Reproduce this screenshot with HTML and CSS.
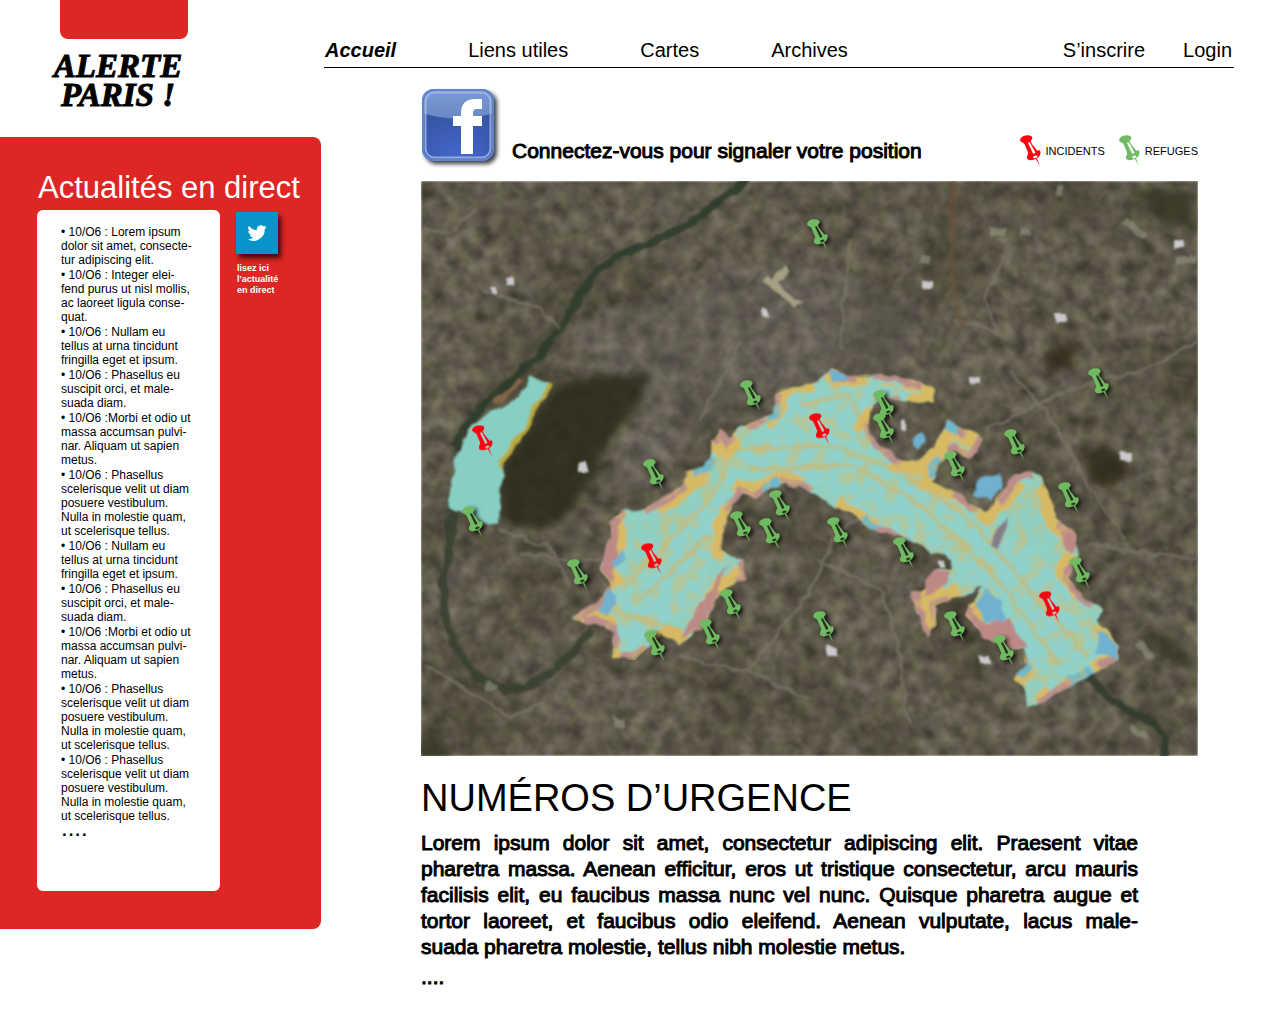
FILE: index.html
```html
<!DOCTYPE html>
<html lang="fr">
<head>
<meta charset="utf-8">
<meta name="viewport" content="width=device-width, initial-scale=1">
<title>Alerte Paris !</title>
<link rel="stylesheet" href="styles.css">
</head>
<body>
<svg class="defs" aria-hidden="true">
  <symbol id="pin" viewBox="0 0 64 94">
    <ellipse cx="19" cy="12" rx="19" ry="11" transform="rotate(-14 19 12)"/>
    <path d="M8 20 32 17 37 28 53 48C60 43 64 49 62 57 61 65 54 72 41 75 31 78 21 76 21 69 21 63 25 60 25 54L15 30Z"/>
    <path class="pin-gap" d="M24 23 30 22 47 53 43 57 40 57Z"/>
    <path class="pin-gap" d="M40 66 47 62 54 64 50 69 42 71Z"/>
    <path d="M48 72 52 71 61 94Z"/>
  </symbol>
</svg>
<div class="page">
  <aside class="side">
    <div class="tab"></div>
    <a class="logo" href="#">ALERTE<br>PARIS !</a>
    <section class="news">
      <h2>Actualités en direct</h2>
      <div class="news-body">
        <ul class="feed">
          <li>• 10/O6 : Lorem ipsum<br>dolor sit amet, consecte-<br>tur adipiscing elit.</li>
          <li>• 10/O6 : Integer elei-<br>fend purus ut nisl mollis,<br>ac laoreet ligula conse-<br>quat.</li>
          <li>• 10/O6 : Nullam eu<br>tellus at urna tincidunt<br>fringilla eget et ipsum.</li>
          <li>• 10/O6 : Phasellus eu<br>suscipit orci, et male-<br>suada diam.</li>
          <li>• 10/O6 :Morbi et odio ut<br>massa accumsan pulvi-<br>nar. Aliquam ut sapien<br>metus.</li>
          <li>• 10/O6 : Phasellus<br>scelerisque velit ut diam<br>posuere vestibulum.<br>Nulla in molestie quam,<br>ut scelerisque tellus.</li>
          <li>• 10/O6 : Nullam eu<br>tellus at urna tincidunt<br>fringilla eget et ipsum.</li>
          <li>• 10/O6 : Phasellus eu<br>suscipit orci, et male-<br>suada diam.</li>
          <li>• 10/O6 :Morbi et odio ut<br>massa accumsan pulvi-<br>nar. Aliquam ut sapien<br>metus.</li>
          <li>• 10/O6 : Phasellus<br>scelerisque velit ut diam<br>posuere vestibulum.<br>Nulla in molestie quam,<br>ut scelerisque tellus.</li>
          <li>• 10/O6 : Phasellus<br>scelerisque velit ut diam<br>posuere vestibulum.<br>Nulla in molestie quam,<br>ut scelerisque tellus.</li>
          <li class="more">....</li>
        </ul>
        <a class="twitter" href="#">
          <svg class="bird" viewBox="0 0 42 42" aria-hidden="true"><g transform="translate(11.500 11.500) scale(.8)"><path fill="#fff" d="M24 4.600a10 10 0 0 1-2.800.8 5 5 0 0 0 2.200-2.700 10 10 0 0 1-3.100 1.200 4.900 4.900 0 0 0-8.400 4.500A14 14 0 0 1 1.700 3.200a4.900 4.900 0 0 0 1.500 6.600 5 5 0 0 1-2.200-.6 4.900 4.900 0 0 0 3.900 4.900 5 5 0 0 1-2.200.1 4.900 4.900 0 0 0 4.600 3.400A10 10 0 0 1 0 19.500a14 14 0 0 0 21.500-12.400A10 10 0 0 0 24 4.600z"/></g></svg>
          <span>lisez ici<br>l'actualité<br>en direct</span>
        </a>
      </div>
    </section>
  </aside>
  <main class="main">
    <nav class="nav">
      <div class="links">
        <a class="current" href="#">Accueil</a>
        <a href="#">Liens utiles</a>
        <a href="#">Cartes</a>
        <a href="#">Archives</a>
      </div>
      <div class="account">
        <a href="#">S’inscrire</a>
        <a href="#">Login</a>
      </div>
    </nav>
    <div class="content">
      <div class="connect">
        <a class="signal" href="#">
          <svg class="facebook" viewBox="0 0 74 74" aria-hidden="true">
            <defs>
              <radialGradient id="fb" cx=".5" cy="1" r=".8"><stop offset="0" stop-color="#4469cf"/><stop offset="1" stop-color="#3553a0"/></radialGradient>
              <linearGradient id="gloss" x1="0" y1="0" x2="0" y2="1"><stop offset="0" stop-color="#7b9bd6"/><stop offset="1" stop-color="#6a88c4"/></linearGradient>
              <clipPath id="fbclip"><rect width="72" height="72" rx="12"/></clipPath>
            </defs>
            <g clip-path="url(#fbclip)">
              <rect width="72" height="72" fill="url(#fb)"/>
              <path d="M0 0H72V24Q36 35 0 24Z" fill="url(#gloss)"/>
            </g>
            <rect x="1" y="1" width="70" height="70" rx="11" fill="none" stroke="#5f84cf" stroke-width="2"/>
            <rect x="3.500" y="3.500" width="65" height="65" rx="9" fill="none" stroke="#a9bce6" stroke-opacity=".8" stroke-width="2"/>
            <path fill="#fff" d="M39 65V37H31V27H39V24C39 14 45 10 53 10H60V20H56C52 20 51 21 51 25V27H60V37H51V65Z"/>
          </svg>
          <span>Connectez-vous pour signaler votre position</span>
        </a>
        <ul class="legend">
          <li class="incident"><svg class="pin" aria-hidden="true"><use href="#pin"/></svg>INCIDENTS</li>
          <li class="refuge"><svg class="pin" aria-hidden="true"><use href="#pin"/></svg>REFUGES</li>
        </ul>
      </div>
      <svg class="map" viewBox="421 181 777 575" role="img" aria-label="Carte de Paris">
        <defs>
          <filter id="ground" x="0" y="0" width="100%" height="100%" color-interpolation-filters="sRGB">
            <feTurbulence type="fractalNoise" baseFrequency=".065" numOctaves="3" seed="7"/>
            <feColorMatrix values=".32 .12 .06 0 .13  .3 .14 .02 0 .13  .25 .1 .1 0 .08  0 0 0 0 1"/>
            <feGaussianBlur stdDeviation="1.200"/>
          </filter>
          <filter id="relief" x="0" y="0" width="100%" height="100%" color-interpolation-filters="sRGB">
            <feTurbulence type="fractalNoise" baseFrequency=".012" numOctaves="2" seed="4"/>
            <feColorMatrix values="0 0 0 0 .2  0 0 0 0 .19  0 0 0 0 .12  2.500 0 0 0 -1.050"/>
          </filter>
          <filter id="streets" x="0" y="0" width="100%" height="100%" color-interpolation-filters="sRGB">
            <feTurbulence type="turbulence" baseFrequency=".02 .025" numOctaves="3" seed="21"/>
            <feColorMatrix values="0 0 0 0 .58  0 0 0 0 .56  0 0 0 0 .48  -6 0 0 0 .75"/>
            <feGaussianBlur stdDeviation="1"/>
          </filter>
          <filter id="soft" x="-10%" y="-10%" width="120%" height="120%">
            <feTurbulence type="fractalNoise" baseFrequency=".06" numOctaves="2" seed="3"/>
            <feDisplacementMap in="SourceGraphic" scale="10" xChannelSelector="R" yChannelSelector="G"/>
            <feGaussianBlur stdDeviation="1.300"/>
          </filter>
          <filter id="mottle" x="0" y="0" width="100%" height="100%" color-interpolation-filters="sRGB">
            <feTurbulence type="fractalNoise" baseFrequency=".07" numOctaves="3" seed="12"/>
            <feColorMatrix values="0 0 0 0 .83  0 0 0 0 .73  0 0 0 0 .42  5 0 0 0 -2.400"/>
            <feGaussianBlur stdDeviation="1"/>
          </filter>
          <filter id="shade" x="-50%" y="-30%" width="220%" height="180%">
            <feDropShadow dx="3" dy="2" stdDeviation="2" flood-color="#000" flood-opacity=".8"/>
          </filter>
          <filter id="haze" x="-20%" y="-20%" width="140%" height="140%">
            <feGaussianBlur stdDeviation="4"/>
          </filter>
          <path id="zone" d="M572 617 597 603 612 586 601 568 614 540 610 520 622 513 645 508 670 495 690 478 685 475 705 466 712 440 722 430 728 440 740 427 773 414 775 392 815 383 832 368 842 376 882 373 900 377 920 382 935 390 933 402 910 403 885 397 872 403 868 425 878 443 900 460 918 462 935 446 948 422 985 438 970 460 955 450 935 470 932 482 960 497 974 505 984 510 1003 494 1015 474 1040 475 1050 495 1057 520 1075 532 1078 555 1068 577 1085 600 1102 610 1098 620 1118 645 1118 660 1086 677 1028 709 1026 690 1015 680 1025 665 1022 650 990 642 965 615 983 586 935 606 937 625 927 636 920 620 912 592 930 585 935 570 953 570 952 560 930 550 900 535 870 531 855 513 835 508 810 490 785 482 755 497 742 492 725 520 722 550 743 562 748 577 725 588 715 600 705 625 680 645 660 636 635 660 612 660 614 632 600 623 572 621Z"/>
          <clipPath id="inzone"><use href="#zone"/></clipPath>
        </defs>
        <rect x="421" y="181" width="777" height="575" filter="url(#ground)"/>
        <rect x="421" y="181" width="777" height="575" filter="url(#relief)" opacity=".4"/>
        <rect x="421" y="181" width="777" height="575" filter="url(#streets)" opacity=".3"/>
        <g filter="url(#haze)">
          <path fill="#77757a" opacity=".2" d="M560 330 780 260 930 300 900 370 760 390 640 480 600 500 650 400Z"/>
          <path fill="#2c2a1a" opacity=".85" d="M555 385 600 376 652 372 640 402 610 438 592 475 572 512 545 530 512 526 500 512 500 465Z"/>
          <path fill="#302b19" opacity=".85" d="M1085 452 1105 446 1125 458 1127 478 1110 488 1090 484ZM1043 355 1062 344 1080 342 1070 365 1050 376Z"/>
          <path fill="#2f311d" opacity=".7" d="M421 735 436 735 456 760H415ZM1140 628 1165 632 1198 662V675L1160 655ZM1130 190 1190 190 1198 225 1170 230Z"/>
        </g>
        <g filter="url(#soft)" fill="none">
          <path stroke="#2c3929" stroke-width="8" opacity=".85" d="M750 176C725 196 700 222 655 240 620 255 602 262 592 278 570 310 560 335 535 358 505 390 470 410 455 448"/>
          <path stroke="#363e2d" stroke-width="8" opacity=".85" d="M452 500C455 545 438 580 444 605 450 650 475 682 505 690 545 690 570 655 592 628"/>
          <path stroke="#2f3929" stroke-width="8" opacity=".85" d="M1087 676 1112 700 1158 726C1166 738 1164 748 1166 762"/>
          <g stroke="#7b7769" stroke-width="3" opacity=".7">
            <path d="M985 430 1040 403 1095 382 1140 372 1198 340M1010 370 1055 425 1085 480 1125 540"/>
            <path d="M425 665 470 690 510 718 545 700M500 530 550 548 568 585M520 555 600 560"/>
            <path d="M748 672 810 590 840 530 900 490M820 560 880 590 897 640 908 725M680 656 760 676 810 700"/>
            <path d="M960 320 1000 334 985 300 1005 255M740 340 700 420M850 240 840 350M1090 545 1198 560"/>
            <path d="M421 230 450 232 475 210M480 290 540 308 560 330"/>
          </g>
          <path stroke="#6b5136" stroke-width="6" d="M953 181 952 270 962 330" opacity=".5"/>
          <path stroke="#a3a083" stroke-width="8" d="M765 278 800 306M775 282 788 268"/>
          <path stroke="#86664a" stroke-width="5" d="M495 403 522 380"/>
          <g stroke="#c9c8cc" stroke-width="8">
            <path d="M505 282h8M924 285h9M1055 318h11M970 381h10M1122 456h10M579 468h9M826 652h10M980 658h10M492 290h6M762 313h7M900 425h5M1174 243h9M938 564h5"/>
          </g>
          <g stroke="#969784" stroke-width="8" opacity=".6">
            <path d="M485 685l10 5M612 720l12 4M1020 232h10M990 232h14M1195 260h-18M1138 642l14 18M1130 728l16 8M1060 185v8M930 259h-10M1125 220l20 18"/>
          </g>
        </g>
        <g filter="url(#soft)">
          <path fill="#87cfc3" d="M532 377 551 383 502 465 499 524 472 517 447 508 455 458 472 425 500 408 518 397Z"/>
          <path fill="none" stroke="#b9ab3c" stroke-width="5" d="M550 383 520 435 500 468"/>
          <use href="#zone" fill="#90d0c4"/>
          <g clip-path="url(#inzone)" fill="none">
            <use href="#zone" stroke="#d7ba63" stroke-width="26" stroke-dasharray="70 16 45 40"/>
            <use href="#zone" stroke="#bc8d8b" stroke-width="12" stroke-dasharray="50 60 30 20"/>
            <use href="#zone" stroke="#6eb8cc" stroke-width="16" stroke-dasharray="0 230 22 90 18 160"/>
            <path fill="#90d2cb" d="M614 590 700 505 735 460 780 425 790 394 860 385 925 390 880 398 850 425 880 470 960 505 1000 535 1045 560 1112 652 1050 690 955 570 870 515 790 470 740 475 715 520 705 600 620 655Z"/>
          </g>
        </g>
        <g clip-path="url(#inzone)">
          <g filter="url(#mottle)" opacity=".5"><rect x="560" y="360" width="570" height="355"/></g>
          <g filter="url(#soft)" fill="none" stroke="#d3b56b" stroke-width="4" opacity=".6">
            <path d="M620 590 690 520 730 470M640 600 710 535M610 608 665 625 700 645M735 450 830 445 900 470 970 520 1090 660M750 470 850 465 920 505 990 570 1060 665M800 405 850 395 870 440"/>
          </g>
        </g>
        <g filter="url(#soft)">
          <path fill="#bd8987" d="M968 610 988 622 1008 618 1026 650 985 642ZM1062 532 1076 534 1074 555 1066 550ZM618 516 606 545 601 568 612 585 617 555ZM932 570 950 572 948 582 922 596ZM730 560 700 626 680 642 690 620Z"/>
          <path fill="#6fb1cf" d="M975 605 985 588 1000 600 1004 620 985 620ZM978 482 1000 474 1004 490 990 500 975 495ZM1098 630 1118 645 1118 660 1098 655ZM910 442 922 432 928 442 918 450ZM610 560 622 552 624 562 614 568ZM829 368 850 380 832 382ZM597 610 610 590 618 596 606 616Z"/>
          <path fill="#857d88" d="M1000 522 1008 516 998 548 990 545Z"/>
        </g>
        <g class="refuge" filter="url(#shade)">
          <use href="#pin" x="807" y="219" width="21" height="31"/>
          <use href="#pin" x="740" y="380" width="21" height="31"/>
          <use href="#pin" x="643" y="459" width="21" height="31"/>
          <use href="#pin" x="873" y="390" width="21" height="31"/>
          <use href="#pin" x="873" y="413" width="21" height="31"/>
          <use href="#pin" x="1004" y="429" width="21" height="31"/>
          <use href="#pin" x="1088" y="368" width="21" height="31"/>
          <use href="#pin" x="944" y="451" width="21" height="31"/>
          <use href="#pin" x="462" y="506" width="21" height="31"/>
          <use href="#pin" x="567" y="559" width="21" height="31"/>
          <use href="#pin" x="730" y="511" width="21" height="31"/>
          <use href="#pin" x="759" y="518" width="21" height="31"/>
          <use href="#pin" x="769" y="490" width="21" height="31"/>
          <use href="#pin" x="720" y="589" width="21" height="31"/>
          <use href="#pin" x="699" y="619" width="21" height="31"/>
          <use href="#pin" x="644" y="630" width="21" height="31"/>
          <use href="#pin" x="813" y="611" width="21" height="31"/>
          <use href="#pin" x="1058" y="482" width="21" height="31"/>
          <use href="#pin" x="827" y="517" width="21" height="31"/>
          <use href="#pin" x="893" y="537" width="21" height="31"/>
          <use href="#pin" x="1069" y="557" width="21" height="31"/>
          <use href="#pin" x="944" y="611" width="21" height="31"/>
          <use href="#pin" x="993" y="635" width="21" height="31"/>
        </g>
        <g class="incident">
          <use href="#pin" x="472" y="425" width="21" height="31"/>
          <use href="#pin" x="809" y="413" width="21" height="31"/>
          <use href="#pin" x="641" y="543" width="21" height="31"/>
          <use href="#pin" x="1039" y="591" width="21" height="31"/>
        </g>
      </svg>
      <section class="urgence">
        <h1>NUMÉROS D’URGENCE</h1>
        <p><span class="block">Lorem ipsum dolor sit amet, consectetur adipiscing elit. Praesent vitae pharetra massa. Aenean efficitur, eros ut tristique consectetur, arcu mauris facilisis elit, eu faucibus massa nunc vel nunc. Quisque pharetra augue et</span> <span class="block">tortor laoreet, et faucibus odio eleifend. Aenean vulputate, lacus male-</span>suada pharetra molestie, tellus nibh molestie metus.</p>
        <p class="dots">....</p>
      </section>
    </div>
  </main>
</div>
</body>
</html>
```
FILE: styles.css
```css
* { box-sizing: border-box; }
body {
  margin: 0;
  background: #fff;
  color: #000;
  font-family: "Liberation Sans", Arial, sans-serif;
}
h1, h2, p, ul { margin: 0; padding: 0; font-weight: normal; }
ul { list-style: none; }
a { color: inherit; text-decoration: none; }
.defs { display: none; }
.page { display: flex; align-items: flex-start; }

.side { flex: 0 0 321px; }
.tab {
  width: 128px;
  height: 39px;
  margin-left: 60px;
  background: #de2724;
  border-radius: 0 0 8px 8px;
}
.logo {
  display: block;
  width: 236px;
  height: 98px;
  padding-top: 13px;
  text-align: center;
  font: italic bold 33px/29px "Liberation Serif", "Times New Roman", serif;
  -webkit-text-stroke: 1px #000;
}
.news {
  padding: 33px 20px 38px 37px;
  background: #de2724;
  border-radius: 0 8px 8px 0;
}
.news h2 {
  color: #fff;
  font-size: 31px;
  line-height: 36px;
  white-space: nowrap;
  margin-bottom: 4px;
  padding-left: 1px;
}
.news-body { display: flex; align-items: flex-start; gap: 16px; }
.feed {
  display: flex;
  flex-direction: column;
  gap: 1px;
  width: 183px;
  min-height: 681px;
  padding: 15px 0 48px 24px;
  background: #fff;
  border-radius: 6px;
  font-size: 12px;
  line-height: 14px;
  white-space: nowrap;
}
.more { font-size: 24px; line-height: 8px; }
.twitter {
  color: #fff;
  font-size: 9px;
  line-height: 11px;
  font-weight: bold;
  white-space: nowrap;
}
.twitter span { display: block; padding: 9px 0 0 1px; }
.bird {
  display: block;
  width: 42px;
  height: 42px;
  margin-top: 2px;
  background: #0894c9;
  box-shadow: 3px 4px 5px rgba(0, 0, 0, .75);
}

.main { flex: 1; min-width: 0; padding: 36px 46px 24px 3px; }
.nav {
  display: flex;
  justify-content: space-between;
  padding: 0 2px 3px 1px;
  border-bottom: 1px solid #000;
  font-size: 20px;
  line-height: 28px;
}
.links { display: flex; gap: 72px; }
.account { display: flex; gap: 38px; }
.current { font-weight: bold; font-style: italic; }

.content { padding: 21px 36px 0 97px; }
.connect {
  display: flex;
  justify-content: space-between;
  height: 92px;
}
.signal {
  display: flex;
  gap: 16px;
  font-size: 21px;
  line-height: 24px;
  -webkit-text-stroke: 1px #000;
}
.signal span { margin-top: 50px; }
.facebook {
  width: 74px;
  height: 74px;
  margin-left: 1px;
  filter: drop-shadow(3px 3px 2px rgba(0, 0, 0, .75));
}
.legend {
  display: flex;
  gap: 14px;
  margin-top: 46px;
  font-size: 11px;
  line-height: 32px;
}
.legend li { display: flex; gap: 5px; }
.legend .pin { width: 21px; height: 31px; color: #fff; }
.pin-gap { fill: currentColor; }
.incident svg, g.incident { fill: #fb0410; }
.refuge svg, g.refuge { fill: #6fba62; }
g.refuge { color: #2b3020; }
g.incident { color: #b5cfc6; }
.map { display: block; width: 100%; height: auto; }

.urgence { max-width: 717px; padding-top: 20px; }
.urgence h1 { font-size: 38px; line-height: 44px; white-space: nowrap; }
.urgence p {
  margin-top: 10px;
  font-size: 21px;
  line-height: 26px;
  text-align: justify;
  -webkit-text-stroke: 1px #000;
}
.block { display: block; text-align-last: justify; }
.urgence .dots { margin-top: 4px; }
```
